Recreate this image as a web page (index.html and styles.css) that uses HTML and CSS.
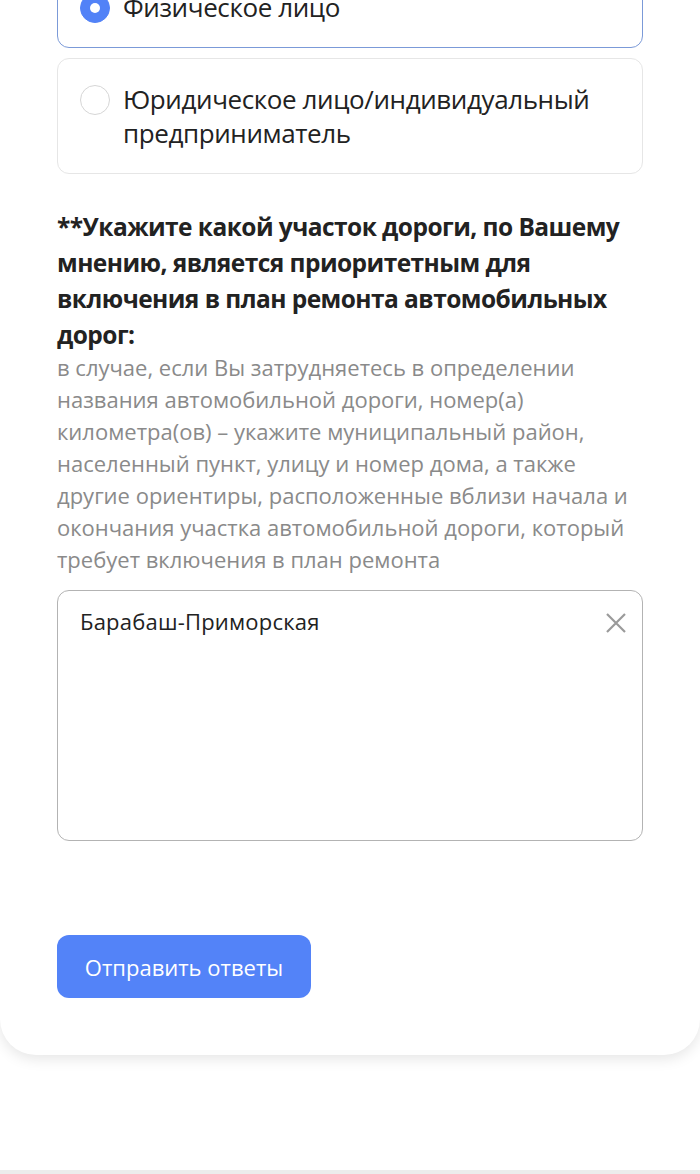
FILE: index.html
```html
<!DOCTYPE html>
<html lang="ru">
<head>
<meta charset="utf-8">
<link rel="stylesheet" href="styles.css">
</head>
<body>
<div class="page">
  <div class="card">
    <div class="options">
      <label class="option option-checked">
        <span class="radio radio-on"></span>
        <span class="option-text">Физическое лицо</span>
      </label>
      <label class="option">
        <span class="radio"></span>
        <span class="option-text">Юридическое лицо/индивидуальный предприниматель</span>
      </label>
    </div>
    <div class="question">
      <div class="q-title">**Укажите какой участок дороги, по Вашему мнению, является приоритетным для включения в план ремонта автомобильных дорог:</div>
      <div class="q-hint">в случае, если Вы затрудняетесь в определении названия автомобильной дороги, номер(а) километра(ов) – укажите муниципальный район, населенный пункт, улицу и номер дома, а также другие ориентиры, расположенные вблизи начала и окончания участка автомобильной дороги, который требует включения в план ремонта</div>
    </div>
    <div class="field">
      <div class="field-text">Барабаш-Приморская</div>
      <svg class="clear" width="22" height="22" viewBox="0 0 22 22"><path d="M2 2 L20 20 M20 2 L2 20" stroke="#9a9a9a" stroke-width="2.2" fill="none"/></svg>
    </div>
    <button class="submit">Отправить ответы</button>
  </div>
  <div class="bottom-line"></div>
</div>
</body>
</html>
```

FILE: styles.css
```css
html, body {
  margin: 0;
  padding: 0;
  background: #ffffff;
}
body {
  font-family: "Open Sans", "Noto Sans", sans-serif;
  color: #222222;
  overflow: hidden;
  height: 1174px;
}
.page {
  height: 1174px;
  display: flex;
  flex-direction: column;
}
.card {
  margin-top: -34px;
  background: #ffffff;
  border-radius: 0 0 36px 36px;
  box-shadow: 0 4px 14px rgba(0, 0, 0, 0.10);
  padding: 0 57px 57px 57px;
  display: flex;
  flex-direction: column;
  align-items: flex-start;
}
.options {
  display: flex;
  flex-direction: column;
  gap: 10px;
  align-self: stretch;
}
.option {
  display: flex;
  align-items: flex-start;
  gap: 13px;
  padding: 23px 22px 23px 22px;
  border: 1px solid #e6e6e6;
  border-radius: 12px;
}
.option-checked {
  border-color: #7b9ad8;
}
.radio {
  flex: none;
  width: 28px;
  height: 28px;
  margin-top: 3px;
  border: 1px solid #d6d6d6;
  border-radius: 50%;
  box-sizing: content-box;
  display: flex;
  align-items: center;
  justify-content: center;
}
.radio-on {
  background: #5282f7;
  border-color: #5282f7;
}
.radio-on::after {
  content: "";
  width: 10px;
  height: 10px;
  border-radius: 50%;
  background: #ffffff;
}
.option-text {
  font-size: 26px;
  line-height: 34px;
  letter-spacing: -0.4px;
  color: #222222;
}
.question {
  margin-top: 35px;
  display: flex;
  flex-direction: column;
}
.q-title {
  font-size: 24.5px;
  font-weight: 700;
  line-height: 36px;
  letter-spacing: -0.55px;
  color: #222222;
}
.q-hint {
  margin-top: -2px;
  font-size: 22px;
  line-height: 32px;
  letter-spacing: 0;
  color: #8a8a8a;
}
.field {
  margin-top: 15px;
  align-self: stretch;
  box-sizing: border-box;
  height: 251px;
  border: 1px solid #b3b3b3;
  border-radius: 12px;
  display: flex;
  justify-content: space-between;
  align-items: flex-start;
  padding: 16px 15px 0 22px;
}
.field-text {
  font-size: 22px;
  line-height: 28px;
  letter-spacing: 0.2px;
  color: #222222;
}
.clear {
  margin-top: 5px;
}
.submit {
  margin-top: 94px;
  height: 63px;
  width: 254px;
  border: none;
  border-radius: 12px;
  background: #5383f8;
  color: #ffffff;
  font-family: "Open Sans", "Noto Sans", sans-serif;
  font-size: 22px;
  letter-spacing: 0;
  padding: 0;
}
.bottom-line {
  margin-top: auto;
  height: 4px;
  background: #ececec;
}
```
